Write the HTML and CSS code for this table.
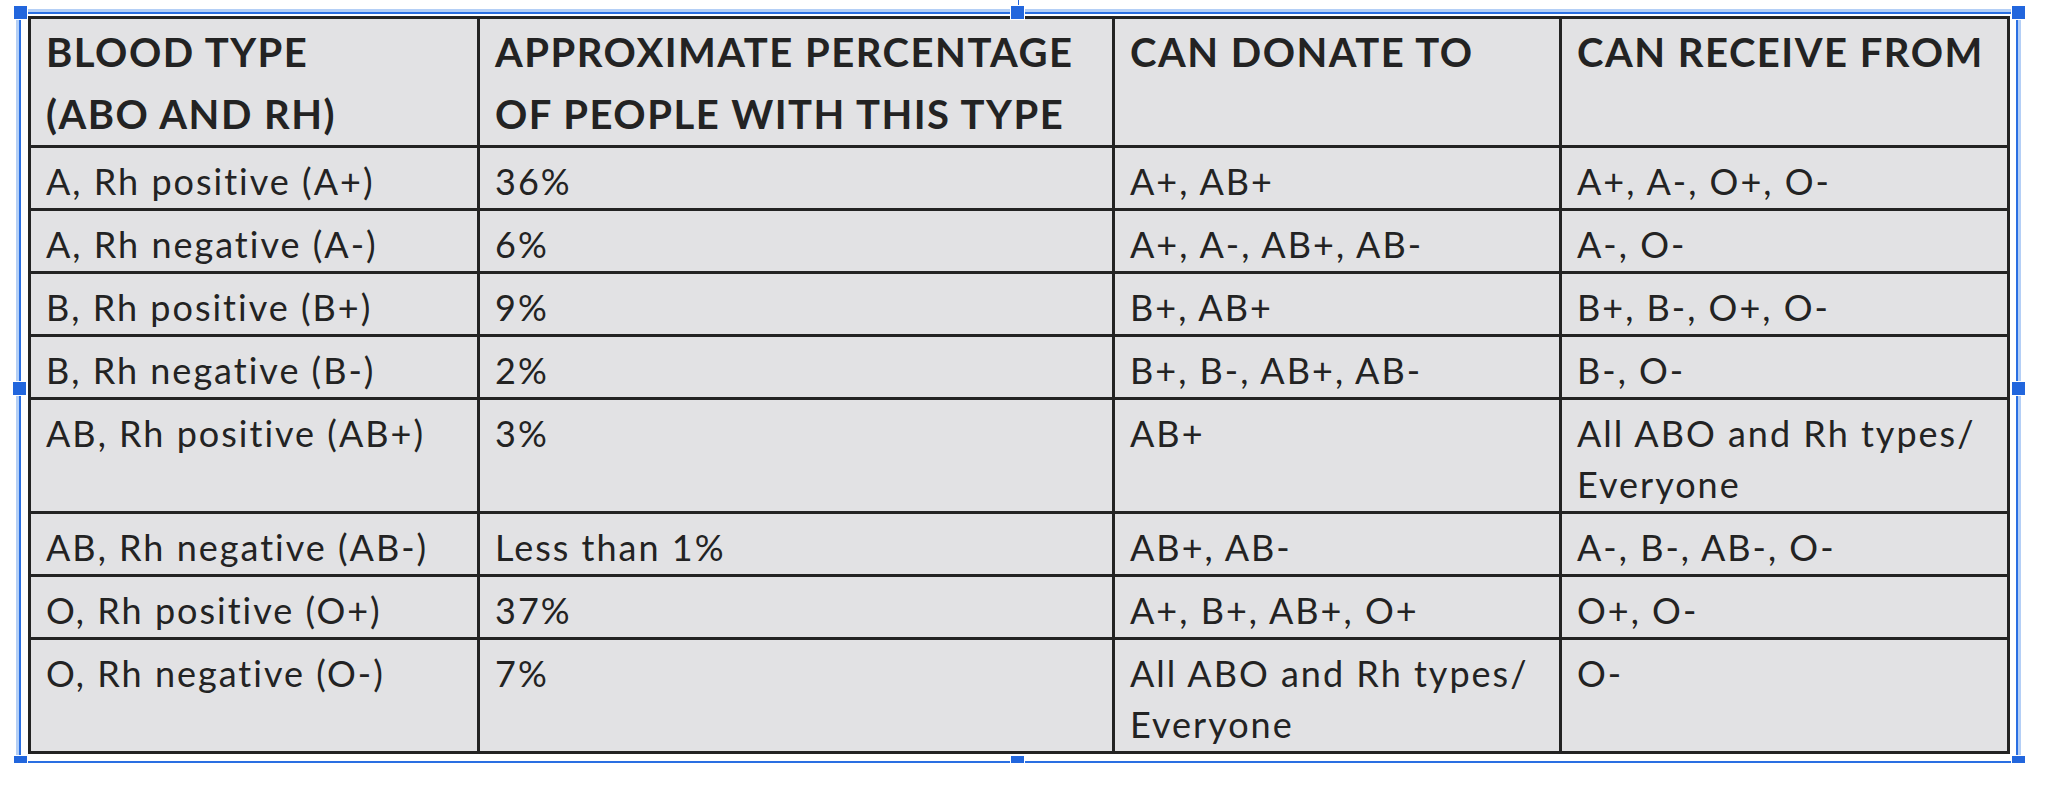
FILE: index.html
```html
<!DOCTYPE html>
<html>
<head>
<meta charset="utf-8">
<link rel="stylesheet" href="styles.css">
</head>
<body>
<div class="canvas">
  <div class="frame">
    <span class="stem"></span>
    <span class="handle h-tl"></span>
    <span class="handle h-tm"></span>
    <span class="handle h-tr"></span>
    <span class="handle h-ml"></span>
    <span class="handle h-mr"></span>
    <span class="handle h-bl"></span>
    <span class="handle h-bm"></span>
    <span class="handle h-br"></span>
    <table class="blood">
      <colgroup>
        <col class="c1"><col class="c2"><col class="c3"><col class="c4">
      </colgroup>
      <thead>
        <tr>
          <th>BLOOD TYPE<br>(ABO AND RH)</th>
          <th>APPROXIMATE PERCENTAGE<br>OF PEOPLE WITH THIS TYPE</th>
          <th>CAN DONATE TO</th>
          <th>CAN RECEIVE FROM</th>
        </tr>
      </thead>
      <tbody>
        <tr><td>A, Rh positive (A+)</td><td>36%</td><td>A+, AB+</td><td>A+, A-, O+, O-</td></tr>
        <tr><td>A, Rh negative (A-)</td><td>6%</td><td>A+, A-, AB+, AB-</td><td>A-, O-</td></tr>
        <tr><td>B, Rh positive (B+)</td><td>9%</td><td>B+, AB+</td><td>B+, B-, O+, O-</td></tr>
        <tr><td>B, Rh negative (B-)</td><td>2%</td><td>B+, B-, AB+, AB-</td><td>B-, O-</td></tr>
        <tr><td>AB, Rh positive (AB+)</td><td>3%</td><td>AB+</td><td>All ABO and Rh types/<br>Everyone</td></tr>
        <tr><td>AB, Rh negative (AB-)</td><td>Less than 1%</td><td>AB+, AB-</td><td>A-, B-, AB-, O-</td></tr>
        <tr><td>O, Rh positive (O+)</td><td>37%</td><td>A+, B+, AB+, O+</td><td>O+, O-</td></tr>
        <tr><td>O, Rh negative (O-)</td><td>7%</td><td>All ABO and Rh types/<br>Everyone</td><td>O-</td></tr>
      </tbody>
    </table>
  </div>
</div>
</body>
</html>
```
FILE: styles.css
```css
html, body {
  margin: 0;
  padding: 0;
  background: #ffffff;
}

.canvas {
  padding: 12px 0 0 19px;
}

.frame {
  position: relative;
  width: 1999px;
  box-sizing: border-box;
  border: 2px solid #2a6fe2;
  box-shadow: 0 0 0 3px #b4cff6;
  padding: 2px 6px 7px 7px;
  background: #ffffff;
}

.blood {
  border-collapse: collapse;
  table-layout: fixed;
  width: 1982px;
  background: #e2e2e4;
  color: #232323;
  font-family: Lato, "Open Sans", sans-serif;
  border: 3px solid #232323;
}

.c1 { width: 449px; }
.c2 { width: 635px; }
.c3 { width: 447px; }
.c4 { width: 448px; }

.blood th,
.blood td {
  border: 3px solid #232323;
  text-align: left;
  vertical-align: top;
  padding: 0 8px 0 15px;
}

.blood th {
  font-weight: 700;
  font-size: 40px;
  line-height: 62px;
  letter-spacing: 1.5px;
  padding-top: 2px;
  padding-bottom: 0;
}

.blood td {
  font-weight: 400;
  font-size: 36px;
  line-height: 51px;
  letter-spacing: 2px;
  padding-top: 8px;
  padding-bottom: 1px;
}

.handle {
  position: absolute;
  width: 13px;
  height: 13px;
  background: #2266dd;
  border: 1px solid #ffffff;
  z-index: 2;
}

.h-tl { left: -8px; top: -9px; }
.h-tr { right: -10px; top: -9px; }
.h-tm { left: 989px; top: -9px; }
.h-ml { left: -9px; top: 367px; }
.h-mr { right: -10px; top: 367px; }
.h-bl { left: -8px; bottom: -9px; }
.h-br { right: -10px; bottom: -9px; }
.h-bm { left: 989px; bottom: -9px; }

.stem {
  position: absolute;
  left: 997px;
  top: -14px;
  width: 1px;
  height: 6px;
  background: #2266dd;
}
```
